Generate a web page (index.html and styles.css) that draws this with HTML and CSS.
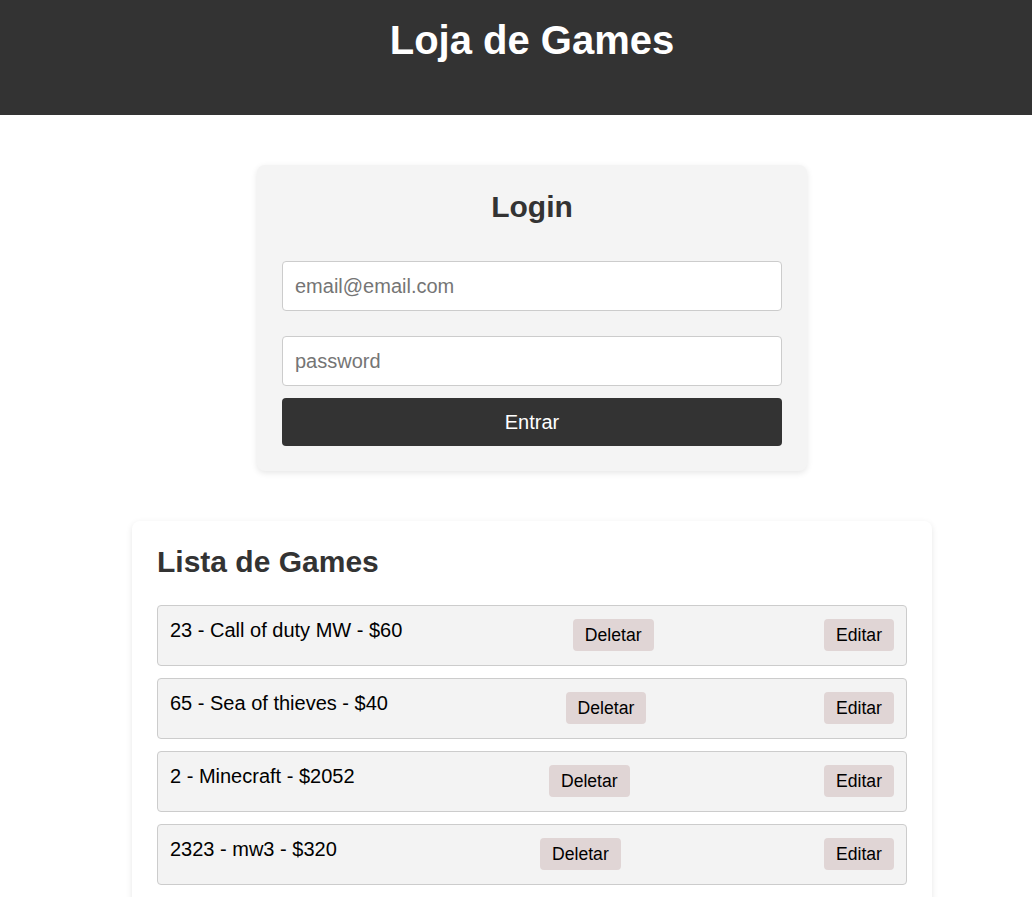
FILE: index.html
```html
<!DOCTYPE html>
<html lang="pt">
<head>
<meta charset="utf-8">
<title>Loja de Games</title>
<link rel="stylesheet" href="styles.css">
</head>
<body>
<div class="page">
<header class="topbar">
  <h1 class="site-title">Loja de Games</h1>
</header>
<main class="main">
  <section class="login-card">
    <h2 class="card-title center">Login</h2>
    <form class="login-form">
      <input class="field" type="email" placeholder="email@email.com">
      <input class="field field-pass" type="password" placeholder="password">
      <button class="btn-primary" type="button">Entrar</button>
    </form>
  </section>
  <section class="list-card">
    <h2 class="card-title">Lista de Games</h2>
    <ul class="game-list">
      <li class="game-item"><span class="game-text">23 - Call of duty MW - $60</span><button class="btn-small" type="button">Deletar</button><button class="btn-small" type="button">Editar</button></li>
      <li class="game-item"><span class="game-text">65 - Sea of thieves - $40</span><button class="btn-small" type="button">Deletar</button><button class="btn-small" type="button">Editar</button></li>
      <li class="game-item"><span class="game-text">2 - Minecraft - $2052</span><button class="btn-small" type="button">Deletar</button><button class="btn-small" type="button">Editar</button></li>
      <li class="game-item"><span class="game-text">2323 - mw3 - $320</span><button class="btn-small" type="button">Deletar</button><button class="btn-small" type="button">Editar</button></li>
    </ul>
  </section>
</main>
</div>
</body>
</html>
```
FILE: styles.css
```css
* { box-sizing: border-box; }
html {
  overflow-x: hidden;
}
html, body {
  margin: 0;
  padding: 0;
  background: #fff;
  font-family: "Liberation Sans", Arial, sans-serif;
  color: #333;
}
.page {
  width: 1064px;
}
.topbar {
  background: #333;
  height: 115px;
  padding-top: 17px;
}
.site-title {
  margin: 0;
  text-align: center;
  color: #fff;
  font-size: 40px;
  line-height: 46px;
  font-weight: bold;
}
.main {
  display: flex;
  flex-direction: column;
  align-items: center;
  padding-top: 50px;
  gap: 50px;
}
.login-card {
  width: 550px;
  background: #f4f4f4;
  border-radius: 8px;
  padding: 25px;
  box-shadow: 0 2px 6px rgba(0,0,0,0.1);
}
.card-title {
  margin: 0;
  font-size: 30px;
  line-height: 34px;
  font-weight: bold;
  color: #333;
}
.center { text-align: center; }
.login-card .card-title { margin-bottom: 37px; }
.login-form {
  display: flex;
  flex-direction: column;
}
.field {
  width: 100%;
  border: 1px solid #ccc;
  border-radius: 4px;
  padding: 12px;
  font-family: inherit;
  font-size: 20px;
  line-height: 24px;
  color: #333;
  background: #fff;
}
.field::placeholder { color: #757575; }
.field-pass { margin-top: 25px; }
.btn-primary {
  margin-top: 12px;
  width: 100%;
  border: none;
  border-radius: 4px;
  background: #333;
  color: #fff;
  font-family: inherit;
  font-size: 20px;
  line-height: 24px;
  padding: 12px;
}
.list-card {
  width: 800px;
  background: #fff;
  border-radius: 8px;
  padding: 25px;
  box-shadow: 0 2px 6px rgba(0,0,0,0.1);
}
.list-card .card-title { margin-bottom: 26px; margin-top: -1px; }
.game-list {
  list-style: none;
  margin: 0;
  padding: 0;
  display: flex;
  flex-direction: column;
  gap: 12px;
}
.game-item {
  display: flex;
  justify-content: space-between;
  align-items: flex-start;
  background: #f3f3f3;
  border: 1px solid #ccc;
  border-radius: 4px;
  padding: 12px;
}
.game-text {
  margin-top: 1px;
  font-size: 20px;
  line-height: 23px;
  color: #000;
}
.btn-small {
  margin-top: 1px;
  margin-bottom: 2px;
  border: none;
  border-radius: 4px;
  background: #e0d5d5;
  color: #000;
  font-family: inherit;
  font-size: 17.6px;
  line-height: 20px;
  padding: 6px 12px;
}
```
